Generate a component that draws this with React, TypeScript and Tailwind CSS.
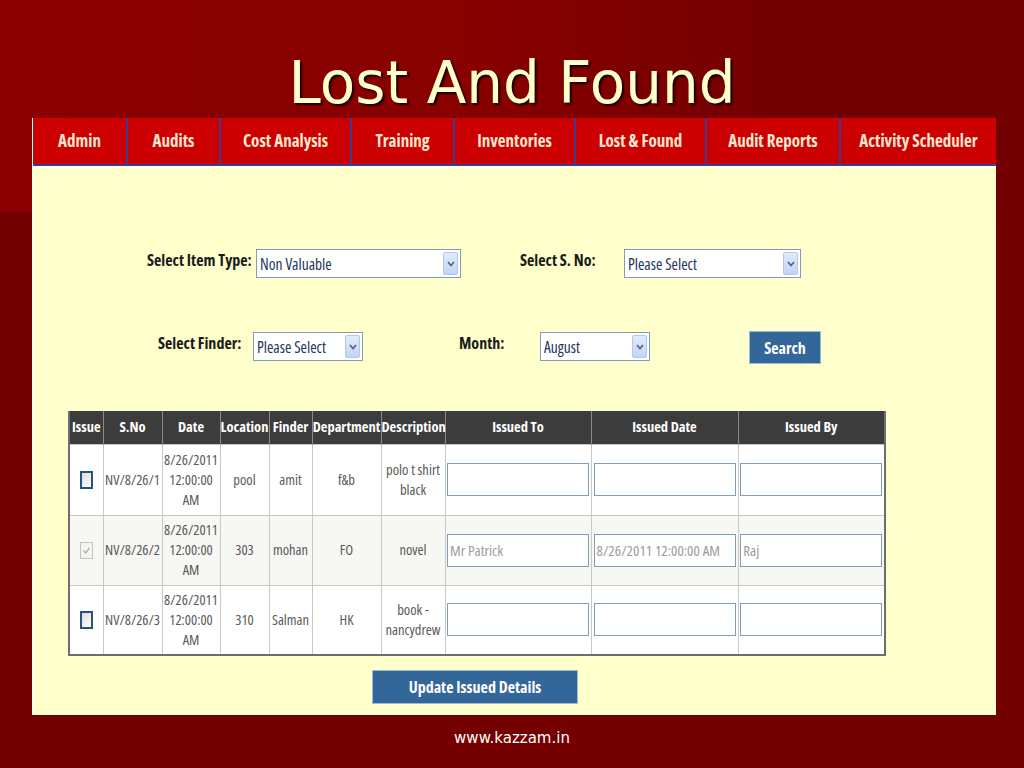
import React from "react";

const narrow = "font-['Open_Sans','Roboto',sans-serif] font-stretch-condensed";

const navItems = [
  { label: "Admin", w: "w-[95px]" },
  { label: "Audits", w: "w-[93px]" },
  { label: "Cost Analysis", w: "w-[131px]" },
  { label: "Training", w: "w-[103px]" },
  { label: "Inventories", w: "w-[121px]" },
  { label: "Lost & Found", w: "w-[131px]" },
  { label: "Audit Reports", w: "w-[134px]" },
  { label: "Activity Scheduler", w: "w-[155px]" },
];

const columns = [
  { label: "Issue", w: "w-[34px]" },
  { label: "S.No", w: "w-[59px]" },
  { label: "Date", w: "w-[58px]" },
  { label: "Location", w: "w-[49px]" },
  { label: "Finder", w: "w-[43px]" },
  { label: "Department", w: "w-[69px]" },
  { label: "Description", w: "w-[64px]" },
  { label: "Issued To", w: "w-[146px]" },
  { label: "Issued Date", w: "w-[147px]" },
  { label: "Issued By", w: "w-[147px]" },
];

interface Item {
  sno: string;
  location: string;
  finder: string;
  dept: string;
  desc: string;
  issued: boolean;
  issuedTo: string;
  issuedDate: string;
  issuedBy: string;
}

const items: Item[] = [
  { sno: "NV/8/26/1", location: "pool", finder: "amit", dept: "f&b", desc: "polo t shirt black", issued: false, issuedTo: "", issuedDate: "", issuedBy: "" },
  { sno: "NV/8/26/2", location: "303", finder: "mohan", dept: "FO", desc: "novel", issued: true, issuedTo: "Mr Patrick", issuedDate: "8/26/2011 12:00:00 AM", issuedBy: "Raj" },
  { sno: "NV/8/26/3", location: "310", finder: "Salman", dept: "HK", desc: "book - nancydrew", issued: false, issuedTo: "", issuedDate: "", issuedBy: "" },
];

function Select({ value, w }: { value: string; w: string }) {
  return (
    <div className={`${w} h-[29px] shrink-0 flex items-center bg-white border border-[#7f9db9] pl-[3px] pr-[2px]`}>
      <span className={`flex-1 text-[15.5px] font-normal text-[#22355a] ${narrow} pt-[2px] whitespace-nowrap`}>{value}</span>
      <span className="w-[15px] h-[23px] flex items-center justify-center rounded-[2px] border border-[#b5c7e8] bg-[linear-gradient(to_bottom,#e3ebfb,#c1d3f5)]">
        <svg width="8" height="6" viewBox="0 0 8 6">
          <path d="M1 1 L4 4.5 L7 1" fill="none" stroke="#4d6185" strokeWidth="1.6" />
        </svg>
      </span>
    </div>
  );
}

function Checkbox({ checked }: { checked: boolean }) {
  if (checked) {
    return (
      <div className="w-[13px] h-[17px] mx-auto border border-[#c4c4bc] bg-[#f4f4f0] flex items-center justify-center">
        <svg width="9" height="9" viewBox="0 0 9 9">
          <path d="M1.5 4.5 L3.8 7 L7.5 1.8" fill="none" stroke="#b0b0a8" strokeWidth="1.3" />
        </svg>
      </div>
    );
  }
  return (
    <div className="w-[13px] h-[18px] mx-auto border-2 border-[#2a5185] bg-[linear-gradient(135deg,#dcdcd6,#ffffff)]" />
  );
}

function IssueInput({ value }: { value: string }) {
  return (
    <div className={`w-[142px] h-[33px] mx-auto bg-white border border-[#7f9db9] flex items-center px-[2px] text-[15px] text-[#9c9c9c] ${narrow} whitespace-nowrap overflow-hidden`}>
      {value}
    </div>
  );
}

export default function App() {
  return (
    <div className="w-[1024px] h-[768px] overflow-hidden bg-[#740000] bg-[linear-gradient(to_right,#8b0000_0%,#880000_45%,#720000_80%)] bg-no-repeat bg-[length:100%_212px] flex flex-col">
      <div className="h-[118px] shrink-0 pt-[54px] text-center">
        <h1 className="text-[58px] leading-none text-[#ffffcc] font-['Comic_Sans_MS','DejaVu_Sans',sans-serif] [text-shadow:2px_2px_2px_#1a0000]">
          Lost And Found
        </h1>
      </div>

      <div className="ml-[32px] w-[964px] h-[597px] shrink-0 bg-[#ffffcc] border-l border-white flex flex-col">
        <nav className="flex h-[48px] shrink-0 bg-[#cc0000] border-b-2 border-[#3b3b94]">
          {navItems.map((n, i) => (
            <div
              key={n.label}
              className={`${n.w} shrink-0 flex items-center justify-center text-[17px] font-bold text-[#ffe8d0] ${narrow} whitespace-nowrap ${i < navItems.length - 1 ? "border-r-2 border-[#3b3b94]" : ""}`}
            >
              {n.label}
            </div>
          ))}
        </nav>
        <div className="h-[2px] shrink-0 bg-white" />

        <div className={`${narrow} text-[#1a1a1a] font-bold text-[16px] shrink-0`}>
          <div className="flex items-start mt-[81px] ml-[114px]">
            <div className="w-[109px] shrink-0 whitespace-nowrap -mt-[1px]">Select Item Type:</div>
            <Select value="Non Valuable" w="w-[205px]" />
            <div className="w-[59px] shrink-0" />
            <div className="w-[104px] shrink-0 whitespace-nowrap -mt-[1px]">Select S. No:</div>
            <Select value="Please Select" w="w-[177px]" />
          </div>

          <div className="flex items-start mt-[54px] ml-[125px]">
            <div className="w-[95px] shrink-0 whitespace-nowrap -mt-[1px]">Select Finder:</div>
            <Select value="Please Select" w="w-[110px]" />
            <div className="w-[96px] shrink-0" />
            <div className="w-[81px] shrink-0 whitespace-nowrap -mt-[1px]">Month:</div>
            <Select value="August" w="w-[110px]" />
            <div className="w-[99px] shrink-0" />
            <button className="w-[72px] h-[33px] shrink-0 -mt-[1px] bg-[#336699] border border-[#9fb8d4] text-white text-[16px] font-bold">
              Search
            </button>
          </div>
        </div>

        <table className={`ml-[35px] mt-[47px] w-[816px] shrink-0 table-fixed border-collapse border-2 border-t-0 border-[#6e6e6e] ${narrow}`}>
          <colgroup>
            {columns.map((c) => (
              <col key={c.label} className={c.w} />
            ))}
          </colgroup>
          <thead>
            <tr className="h-[33px] bg-[#3c3c3c]">
              {columns.map((c) => (
                <th key={c.label} className="border-x border-[#8a8a8a] text-white text-[14.5px] font-bold whitespace-nowrap px-0 first:border-l-0 last:border-r-0">
                  {c.label}
                </th>
              ))}
            </tr>
          </thead>
          <tbody className="text-[14.5px] text-[#5a5a5a] leading-[20px]">
            {items.map((it, idx) => (
              <tr key={it.sno} className={`${idx === 0 ? "h-[71px]" : "h-[70px]"} ${idx === 1 ? "bg-[#f7f7f3]" : "bg-white"}`}>
                <td className="border border-[#c8c8c8] border-l-0">
                  <Checkbox checked={it.issued} />
                </td>
                <td className="border border-[#c8c8c8] text-center whitespace-nowrap">{it.sno}</td>
                <td className="border border-[#c8c8c8] text-center">
                  8/26/2011
                  <br />
                  12:00:00
                  <br />
                  AM
                </td>
                <td className="border border-[#c8c8c8] text-center">{it.location}</td>
                <td className="border border-[#c8c8c8] text-center">{it.finder}</td>
                <td className="border border-[#c8c8c8] text-center">{it.dept}</td>
                <td className="border border-[#c8c8c8] text-center px-[2px]">{it.desc}</td>
                <td className="border border-[#c8c8c8]">
                  <IssueInput value={it.issuedTo} />
                </td>
                <td className="border border-[#c8c8c8]">
                  <IssueInput value={it.issuedDate} />
                </td>
                <td className="border border-[#c8c8c8] border-r-0">
                  <IssueInput value={it.issuedBy} />
                </td>
              </tr>
            ))}
          </tbody>
        </table>

        <div className="mt-[14px] ml-[339px] shrink-0">
          <button className={`w-[206px] h-[34px] bg-[#336699] border border-[#9fb8d4] text-white text-[16px] font-bold ${narrow}`}>
            Update Issued Details
          </button>
        </div>
      </div>

      <div className="flex-1 flex justify-center pt-[12px]">
        <span className="text-[15px] text-white font-['DejaVu_Sans',sans-serif]">www.kazzam.in</span>
      </div>
    </div>
  );
}
